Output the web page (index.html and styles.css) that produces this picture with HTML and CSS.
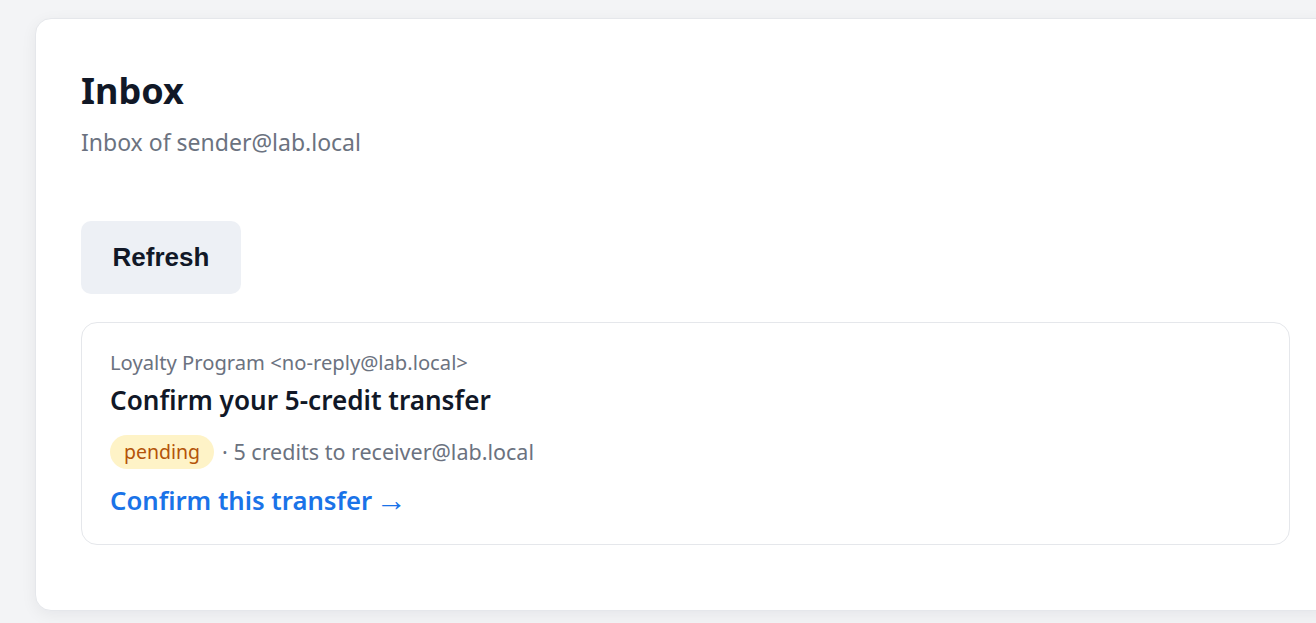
FILE: index.html
```html
<!DOCTYPE html>
<html lang="en">
<head>
<meta charset="utf-8">
<title>Inbox</title>
<link rel="stylesheet" href="styles.css">
</head>
<body>
<main class="page">
  <section class="panel">
    <h1 class="title">Inbox</h1>
    <p class="subtitle">Inbox of sender@lab.local</p>
    <button class="refresh" type="button">Refresh</button>
    <ul class="messages">
      <li class="message">
        <div class="from">Loyalty Program &lt;no-reply@lab.local&gt;</div>
        <div class="subject">Confirm your 5-credit transfer</div>
        <div class="meta"><span class="badge">pending</span><span class="detail">· 5 credits to receiver@lab.local</span></div>
        <a class="action" href="#">Confirm this transfer <span class="arrow">→</span></a>
      </li>
    </ul>
  </section>
</main>
</body>
</html>
```

FILE: styles.css
```css
html, body {
  margin: 0;
  padding: 0;
  background: #f3f4f6;
  overflow: hidden;
}
body {
  font-family: "Noto Sans", "Open Sans", sans-serif;
  color: #111827;
}
.page {
  padding: 18px 0 12px 35px;
}
.panel {
  width: 1301px;
  box-sizing: border-box;
  background: #ffffff;
  border: 1px solid #e5e7eb;
  border-radius: 16px;
  box-shadow: 0 4px 16px rgba(17, 24, 39, 0.06);
  padding: 50px 45px 65px;
}
.title {
  margin: 0;
  font-size: 36px;
  line-height: 43px;
  font-weight: 700;
  color: #111827;
}
.subtitle {
  margin: 14px 0 0;
  font-size: 23px;
  line-height: 32px;
  color: #6b7280;
}
.refresh {
  display: block;
  margin-top: 63px;
  font-family: "Liberation Sans", Arial, sans-serif;
  font-size: 26px;
  font-weight: 700;
  color: #111827;
  background: #edf0f5;
  border: none;
  border-radius: 10px;
  padding: 21px 31.5px;
  line-height: 31px;
}
.messages {
  list-style: none;
  margin: 28px 0 0;
  padding: 0;
}
.message {
  border: 1px solid #e5e7eb;
  border-radius: 16px;
  padding: 25px 28px 25px;
  display: flex;
  flex-direction: column;
  align-items: flex-start;
}
.from {
  font-size: 20.2px;
  line-height: 28px;
  color: #6b7280;
}
.subject {
  margin-top: 7px;
  font-size: 26.1px;
  line-height: 34px;
  font-weight: 600;
  color: #111827;
}
.meta {
  margin-top: 18px;
  display: flex;
  align-items: center;
  gap: 8px;
  font-size: 21.5px;
  line-height: 30px;
  color: #6b7280;
}
.badge {
  background: #fef3c7;
  color: #b45309;
  font-size: 19.5px;
  line-height: 26px;
  padding: 4px 14px;
  border-radius: 999px;
}
.action {
  margin-top: 14px;
  font-size: 25.7px;
  line-height: 36px;
  font-weight: 600;
  color: #1a73e8;
  text-decoration: none;
}
.arrow {
  font-family: "Liberation Sans", Arial, sans-serif;
  font-weight: 400;
  font-size: 31px;
  line-height: 1;
  vertical-align: -1px;
  margin-left: -3px;
}
```
